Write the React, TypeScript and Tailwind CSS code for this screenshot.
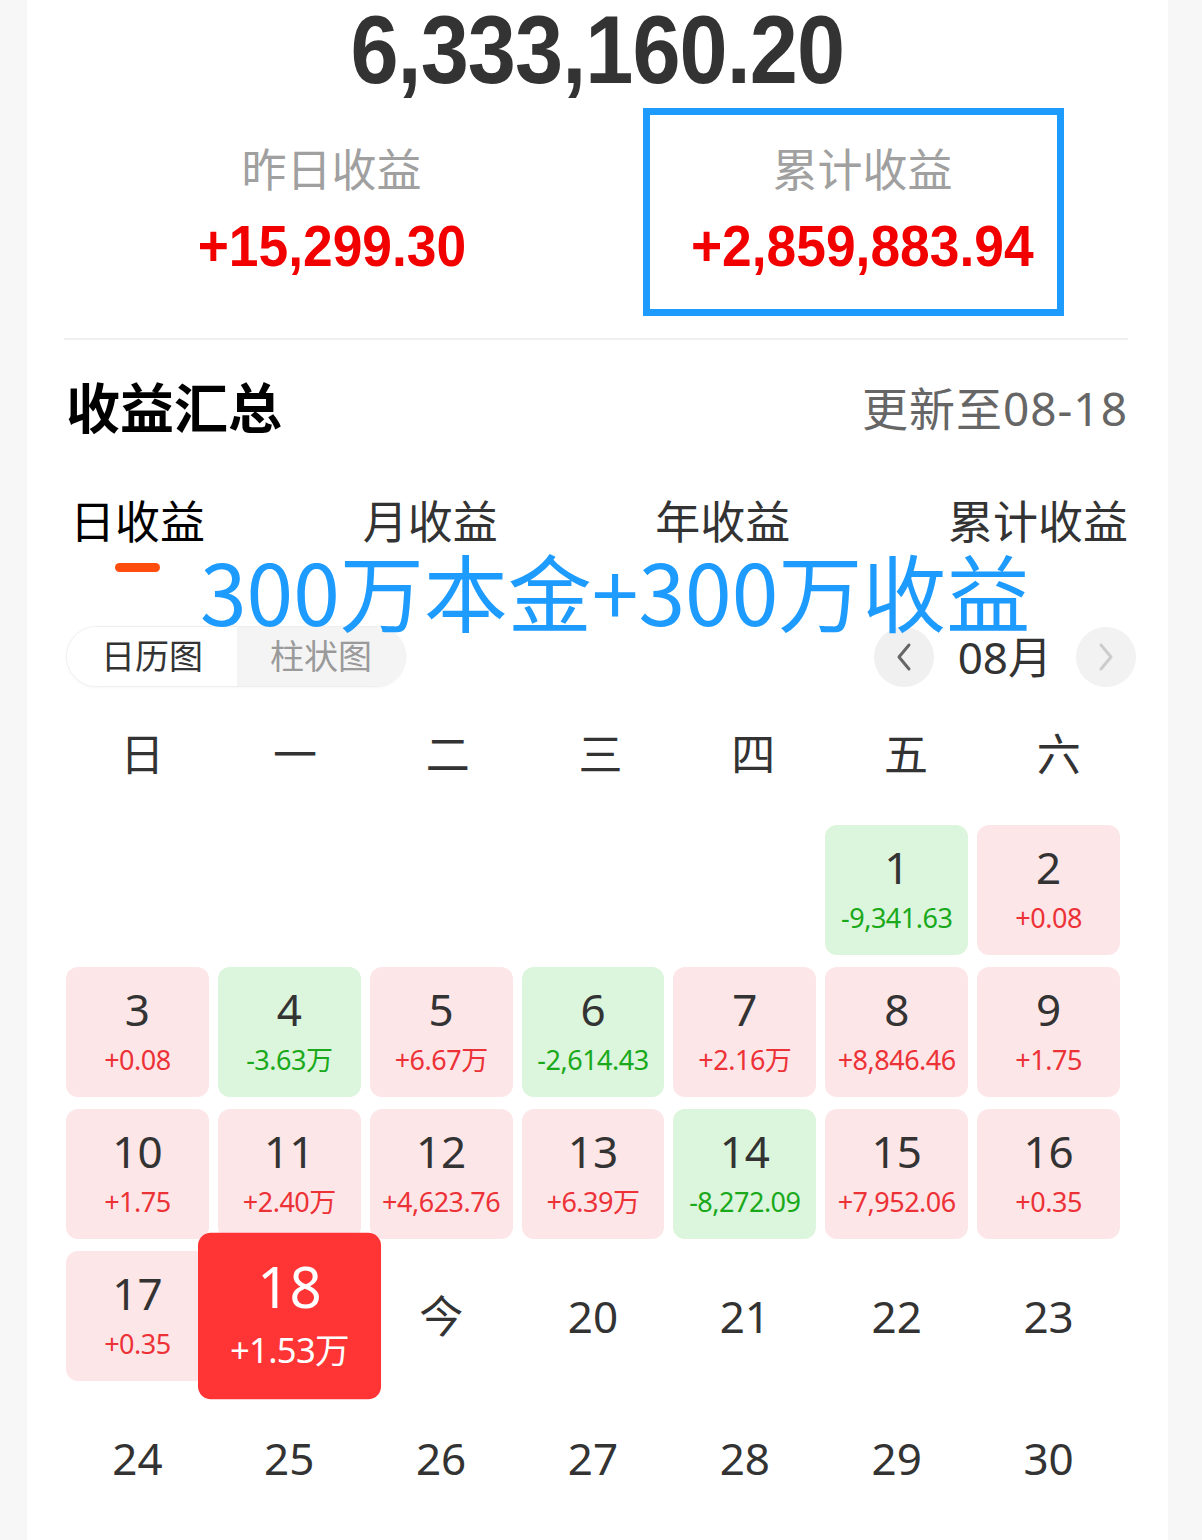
import React from 'react';

type Day = { d: number | string; v?: string; t?: 'up' | 'down' | 'today' } | null;

const rows: Day[][] = [
  [null, null, null, null, null, { d: 1, v: '-9,341.63', t: 'down' }, { d: 2, v: '+0.08', t: 'up' }],
  [
    { d: 3, v: '+0.08', t: 'up' },
    { d: 4, v: '-3.63万', t: 'down' },
    { d: 5, v: '+6.67万', t: 'up' },
    { d: 6, v: '-2,614.43', t: 'down' },
    { d: 7, v: '+2.16万', t: 'up' },
    { d: 8, v: '+8,846.46', t: 'up' },
    { d: 9, v: '+1.75', t: 'up' },
  ],
  [
    { d: 10, v: '+1.75', t: 'up' },
    { d: 11, v: '+2.40万', t: 'up' },
    { d: 12, v: '+4,623.76', t: 'up' },
    { d: 13, v: '+6.39万', t: 'up' },
    { d: 14, v: '-8,272.09', t: 'down' },
    { d: 15, v: '+7,952.06', t: 'up' },
    { d: 16, v: '+0.35', t: 'up' },
  ],
  [
    { d: 17, v: '+0.35', t: 'up' },
    { d: 18, v: '+1.53万', t: 'today' },
    { d: '今' },
    { d: 20 },
    { d: 21 },
    { d: 22 },
    { d: 23 },
  ],
  [{ d: 24 }, { d: 25 }, { d: 26 }, { d: 27 }, { d: 28 }, { d: 29 }, { d: 30 }],
];

const weekdays = ['日', '一', '二', '三', '四', '五', '六'];

const Cell: React.FC<{ day: Day }> = ({ day }) => {
  if (!day) return <div className="h-[130px]" />;
  if (!day.t) {
    return (
      <div className="h-[130px] flex items-center justify-center text-[44px] text-[#333]">
        {day.d}
      </div>
    );
  }
  if (day.t === 'today') {
    return (
      <div className="relative z-10 h-[130px] rounded-[10px] bg-[#ff3535] scale-[1.28] flex flex-col items-center text-white">
        <div className="mt-[14px] h-[56px] leading-[56px] text-[44px]">{day.d}</div>
        <div className="mt-[4px] h-[36px] leading-[36px] text-[27px] tracking-[-0.5px]">{day.v}</div>
      </div>
    );
  }
  const up = day.t === 'up';
  return (
    <div
      className={`h-[130px] rounded-[12px] flex flex-col items-center ${up ? 'bg-[#fde6e8]' : 'bg-[#dcf5dd]'}`}
    >
      <div className="mt-[14px] h-[56px] leading-[56px] text-[44px] text-[#333]">{day.d}</div>
      <div
        className={`mt-[5px] h-[36px] leading-[36px] text-[27px] tracking-[-0.5px] ${up ? 'text-[#ec3237]' : 'text-[#1aa91a]'}`}
      >
        {day.v}
      </div>
    </div>
  );
};

const App: React.FC = () => {
  return (
    <div
      className="min-h-[1540px] bg-[#f7f7f7] flex"
      style={{ fontFamily: '"Noto Sans", "Noto Sans CJK SC", sans-serif' }}
    >
      <div className="relative ml-[27px] w-[1141px] h-[1540px] bg-white pl-[39px] pr-[40px] overflow-hidden">
        {/* total */}
        <div
          className="h-[100px] pt-[2px] text-center text-[96px] leading-none font-bold text-[#333] tracking-[-1px]"
          style={{ fontFamily: '"Liberation Sans", sans-serif' }}
        >
          <span className="inline-block scale-x-[0.9]">6,333,160.20</span>
        </div>

        {/* yesterday / total profit */}
        <div className="h-[238px] flex">
          {[
            ['昨日收益', '+15,299.30'],
            ['累计收益', '+2,859,883.94'],
          ].map(([label, value]) => (
            <div key={label} className="flex-1 flex flex-col items-center">
              <div className="mt-[48px] h-[44px] leading-[44px] text-[45px] text-[#a0a0a0]">{label}</div>
              <div
                className="mt-[24px] h-[60px] leading-[60px] text-[58px] font-bold text-[#f20000]"
                style={{ fontFamily: '"Liberation Sans", sans-serif' }}
              >
                <span className="inline-block scale-x-[0.92]">{value}</span>
              </div>
            </div>
          ))}
        </div>

        <div className="-ml-[2px] h-[2px] bg-[#f0f0f0]" />

        {/* summary header */}
        <div className="mt-[38px] h-[60px] flex items-center justify-between">
          <div className="text-[54px] font-bold text-black">收益汇总</div>
          <div className="text-[46px] tracking-[1px] text-[#666]">更新至08-18</div>
        </div>

        {/* tabs */}
        <div className="mt-[59px] h-[50px] flex items-center justify-between text-[45px] leading-[50px]">
          <div className="pl-[4px] text-black">日收益</div>
          <div className="text-[#333]">月收益</div>
          <div className="text-[#333]">年收益</div>
          <div className="text-[#333]">累计收益</div>
        </div>
        <div className="mt-[16px] h-[9px] w-[45px] ml-[49px] rounded-full bg-[#ff4d0d]" />

        {/* view toggle + month nav */}
        <div className="mt-[54px] h-[61px] w-[1070px] flex items-center justify-between">
          <div className="flex h-[61px] w-[340px] rounded-full border border-[#eeeeee] overflow-hidden text-[34px] shadow-[0_1px_3px_rgba(0,0,0,0.04)]">
            <div className="w-[170px] flex items-center justify-center bg-white text-[#333]">日历图</div>
            <div className="flex-1 flex items-center justify-center bg-[#f4f4f4] text-[#9a9a9a]">柱状图</div>
          </div>
          <div className="flex items-center">
            <div className="w-[60px] h-[60px] rounded-full bg-[#f0f0f0] flex items-center justify-center">
              <svg width="20" height="30" viewBox="0 0 20 30" fill="none">
                <polyline points="15,3 5,15 15,27" stroke="#666" strokeWidth="3" strokeLinecap="round" strokeLinejoin="round" />
              </svg>
            </div>
            <div className="mx-[24px] text-[44px] text-[#333] leading-none">08月</div>
            <div className="w-[60px] h-[60px] rounded-full bg-[#f2f2f2] flex items-center justify-center">
              <svg width="20" height="30" viewBox="0 0 20 30" fill="none">
                <polyline points="5,3 15,15 5,27" stroke="#cccccc" strokeWidth="3" strokeLinecap="round" strokeLinejoin="round" />
              </svg>
            </div>
          </div>
        </div>

        {/* weekday header */}
        <div className="mt-[42px] h-[50px] w-[1069px] grid grid-cols-7 text-[44px] leading-[50px] text-[#333] text-center">
          {weekdays.map((w) => (
            <div key={w}>{w}</div>
          ))}
        </div>

        {/* calendar grid */}
        <div className="mt-[46px] w-[1054px] grid grid-cols-7 gap-x-[9px] gap-y-[12px]">
          {rows.flat().map((day, i) => (
            <Cell key={i} day={day} />
          ))}
        </div>

        {/* annotation overlays */}
        <div className="absolute left-[616px] top-[108px] w-[421px] h-[208px] border-[7px] border-[#1e9bff]" />
        <div
          className="absolute left-[173px] top-[548px] text-[84px] leading-none text-[#1e9bff] whitespace-nowrap"
          style={{ fontFamily: '"Noto Sans CJK SC", sans-serif' }}
        >
          300万本金+300万收益
        </div>
      </div>
    </div>
  );
};

export default App;
